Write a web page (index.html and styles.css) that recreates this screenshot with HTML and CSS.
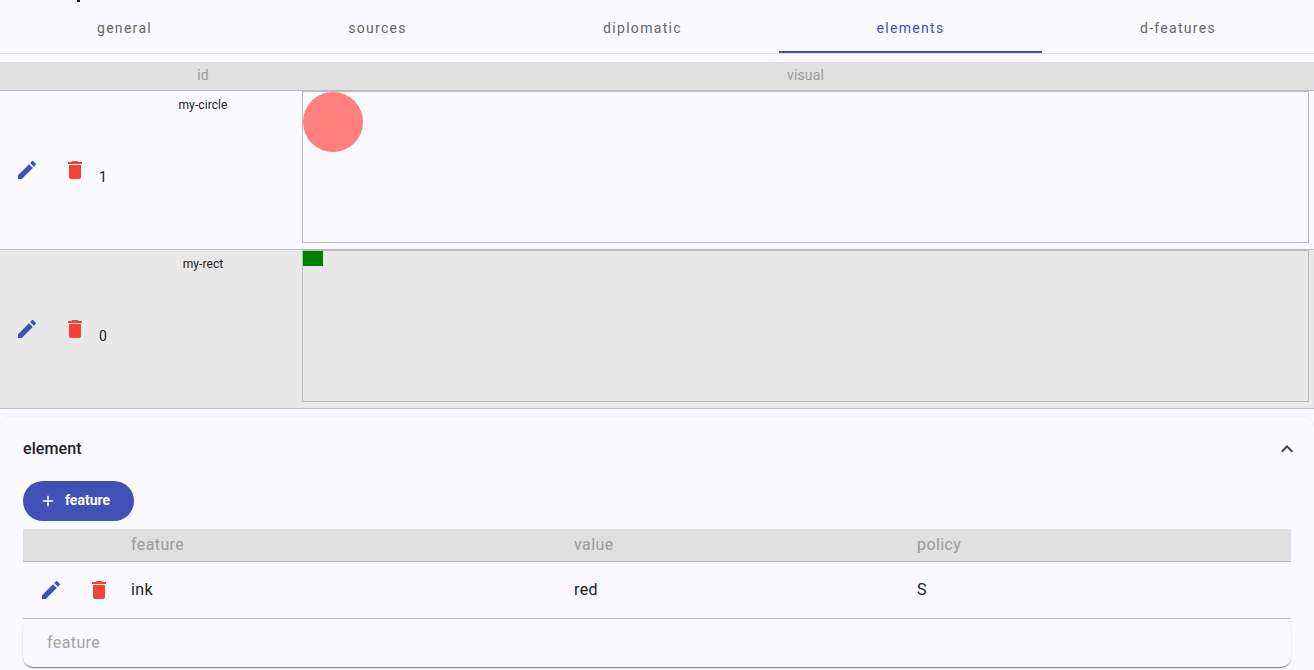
FILE: index.html
```html
<!DOCTYPE html>
<html lang="en">
<head>
<meta charset="utf-8">
<title>elements</title>
<link rel="stylesheet" href="styles.css">
</head>
<body>
<svg width="0" height="0" class="defs" aria-hidden="true">
  <symbol id="i-edit" viewBox="0 0 24 24"><path d="M3 17.25V21h3.75L17.81 9.94l-3.75-3.75L3 17.25zM20.71 7.04c.39-.39.39-1.02 0-1.41l-2.34-2.34c-.39-.39-1.02-.39-1.41 0l-1.83 1.83 3.75 3.75 1.83-1.83z"/></symbol>
  <symbol id="i-delete" viewBox="0 0 24 24"><path d="M6 19c0 1.1.9 2 2 2h8c1.1 0 2-.9 2-2V7H6v12zM19 4h-3.5l-1-1h-5l-1 1H5v2h14V4z"/></symbol>
</svg>
<div class="clip-top"><span class="clip-mark"></span></div>
<nav class="tabs">
  <div class="tab">general</div>
  <div class="tab">sources</div>
  <div class="tab">diplomatic</div>
  <div class="tab active">elements</div>
  <div class="tab">d-features</div>
</nav>
<section class="elements">
  <div class="grid head">
    <div></div><div></div>
    <div class="center">id</div>
    <div class="center">visual</div>
  </div>
  <div class="grid row">
    <div class="actions">
      <button class="icon edit"><svg><use href="#i-edit"/></svg></button>
      <button class="icon del"><svg><use href="#i-delete"/></svg></button>
    </div>
    <div class="index">1</div>
    <div class="id">my-circle</div>
    <div class="visual"><svg class="canvas"><circle cx="30" cy="30" r="30" fill="#ff7f7f"/></svg></div>
  </div>
  <div class="grid row alt">
    <div class="actions">
      <button class="icon edit"><svg><use href="#i-edit"/></svg></button>
      <button class="icon del"><svg><use href="#i-delete"/></svg></button>
    </div>
    <div class="index">0</div>
    <div class="id">my-rect</div>
    <div class="visual"><svg class="canvas"><rect width="20" height="15" fill="#008000"/></svg></div>
  </div>
</section>
<section class="panel">
  <header class="panel-head">
    <span class="panel-title">element</span>
    <svg class="chevron" viewBox="0 0 24 24"><path d="M7.41 15.41 12 10.83l4.59 4.58L18 14l-6-6-6 6z"/></svg>
  </header>
  <button class="add">
    <svg viewBox="0 0 24 24"><path d="M19 13h-6v6h-2v-6H5v-2h6V5h2v6h6v2z"/></svg>
    <span>feature</span>
  </button>
  <div class="ftable">
    <div class="fgrid fhead">
      <div></div><div>feature</div><div>value</div><div>policy</div>
    </div>
    <div class="fgrid frow">
      <div class="factions">
        <button class="icon edit"><svg><use href="#i-edit"/></svg></button>
        <button class="icon del"><svg><use href="#i-delete"/></svg></button>
      </div>
      <div>ink</div><div>red</div><div>S</div>
    </div>
  </div>
  <div class="filter">feature</div>
</section>
</body>
</html>
```
FILE: styles.css
```css
* { box-sizing: border-box; }
html, body { margin: 0; height: 670px; overflow: hidden; }
body { background: #f9f9ff; font-family: Roboto, "Liberation Sans", sans-serif; color: #212121; }
.defs { position: absolute; }

.clip-top { height: 2px; padding-left: 77px; overflow: hidden; }
.clip-mark { display: block; width: 3px; height: 2px; background: #1a1033; }

.tabs { display: grid; grid-template-columns: 249px 257px 273px 263px 272px; height: 52px; border-bottom: 1px solid #e0e0e8; }
.tab { display: flex; align-items: center; justify-content: center; padding-top: 1px; font-size: 14px; font-weight: 400; letter-spacing: 1.3px; color: #666; }
.tab.active { color: #3f51b5; border-bottom: 2px solid #3f51b5; padding-top: 3px; }

.elements { margin-top: 8px; }
.grid { display: grid; grid-template-columns: 99px 5px 198px 1007px; }
.head { height: 29px; background: #e0e0e0; border-bottom: 1px solid #bdbdbd; font-size: 14px; color: #9b9b9b; line-height: 27px; letter-spacing: .15px; }
.center { text-align: center; }
.row { height: 159px; border-bottom: 1px solid #bdbdbd; }
.alt { background: #e8e8e8; }
.actions { display: flex; align-items: center; padding-left: 3px; }
.icon { display: flex; align-items: center; justify-content: center; width: 48px; height: 48px; padding: 0; border: 0; background: none; }
.icon svg { width: 24px; height: 24px; }
.edit svg { fill: #3f51b5; }
.del svg { fill: #f44336; }
.index { align-self: center; padding-top: 14px; font-size: 14px; line-height: 16px; color: #212121; }
.id { padding-top: 7px; text-align: center; font-size: 12px; line-height: 15px; letter-spacing: .08px; color: #212121; }
.visual { height: 152px; border: 1px solid #bdbdbd; }
.canvas { display: block; width: 100%; height: 150px; }

.panel { margin-top: 8px; height: 254px; padding: 0 23px; border-radius: 10px 10px 0 0; background: #f9f9ff; box-shadow: 0 0 2px rgba(0,0,0,.1); }
.panel-head { display: flex; align-items: center; justify-content: space-between; height: 63px; padding-bottom: 1px; }
.panel-title { font-size: 16px; font-weight: 500; letter-spacing: .1px; color: #212121; }
.chevron { width: 24px; height: 24px; margin: 1px -8px 0 0; fill: #424242; }
.add { display: flex; align-items: center; gap: 8px; width: 111px; height: 40px; margin-top: 1px; padding: 0 0 2px 16px; border: 0; border-radius: 20px; background: #3f51b5; color: #fff; font-family: inherit; font-size: 14px; font-weight: 700; }
.add svg { width: 18px; height: 18px; fill: #fff; margin-top: 2px; }
.ftable { margin-top: 8px; }
.fgrid { display: grid; grid-template-columns: 108px 443px 343px 1fr; align-items: center; font-size: 16px; letter-spacing: .4px; }
.fhead { height: 33px; background: #e0e0e0; border-bottom: 1px solid #bdbdbd; color: #9b9b9b; padding-bottom: 1px; }
.frow { height: 57px; border-bottom: 1px solid #bdbdbd; color: #212121; padding-bottom: 1px; }
.factions { display: flex; padding-left: 4px; }
.filter { height: 48px; padding: 0 24px; line-height: 47px; border-radius: 10px; background: #f9f9ff; box-shadow: 0 2px 1px -1px rgba(0,0,0,.3), 0 1px 1px 0 rgba(0,0,0,.2), 0 1px 2px 0 rgba(0,0,0,.1); font-size: 16px; letter-spacing: .4px; color: #a5a5a5; }
```
